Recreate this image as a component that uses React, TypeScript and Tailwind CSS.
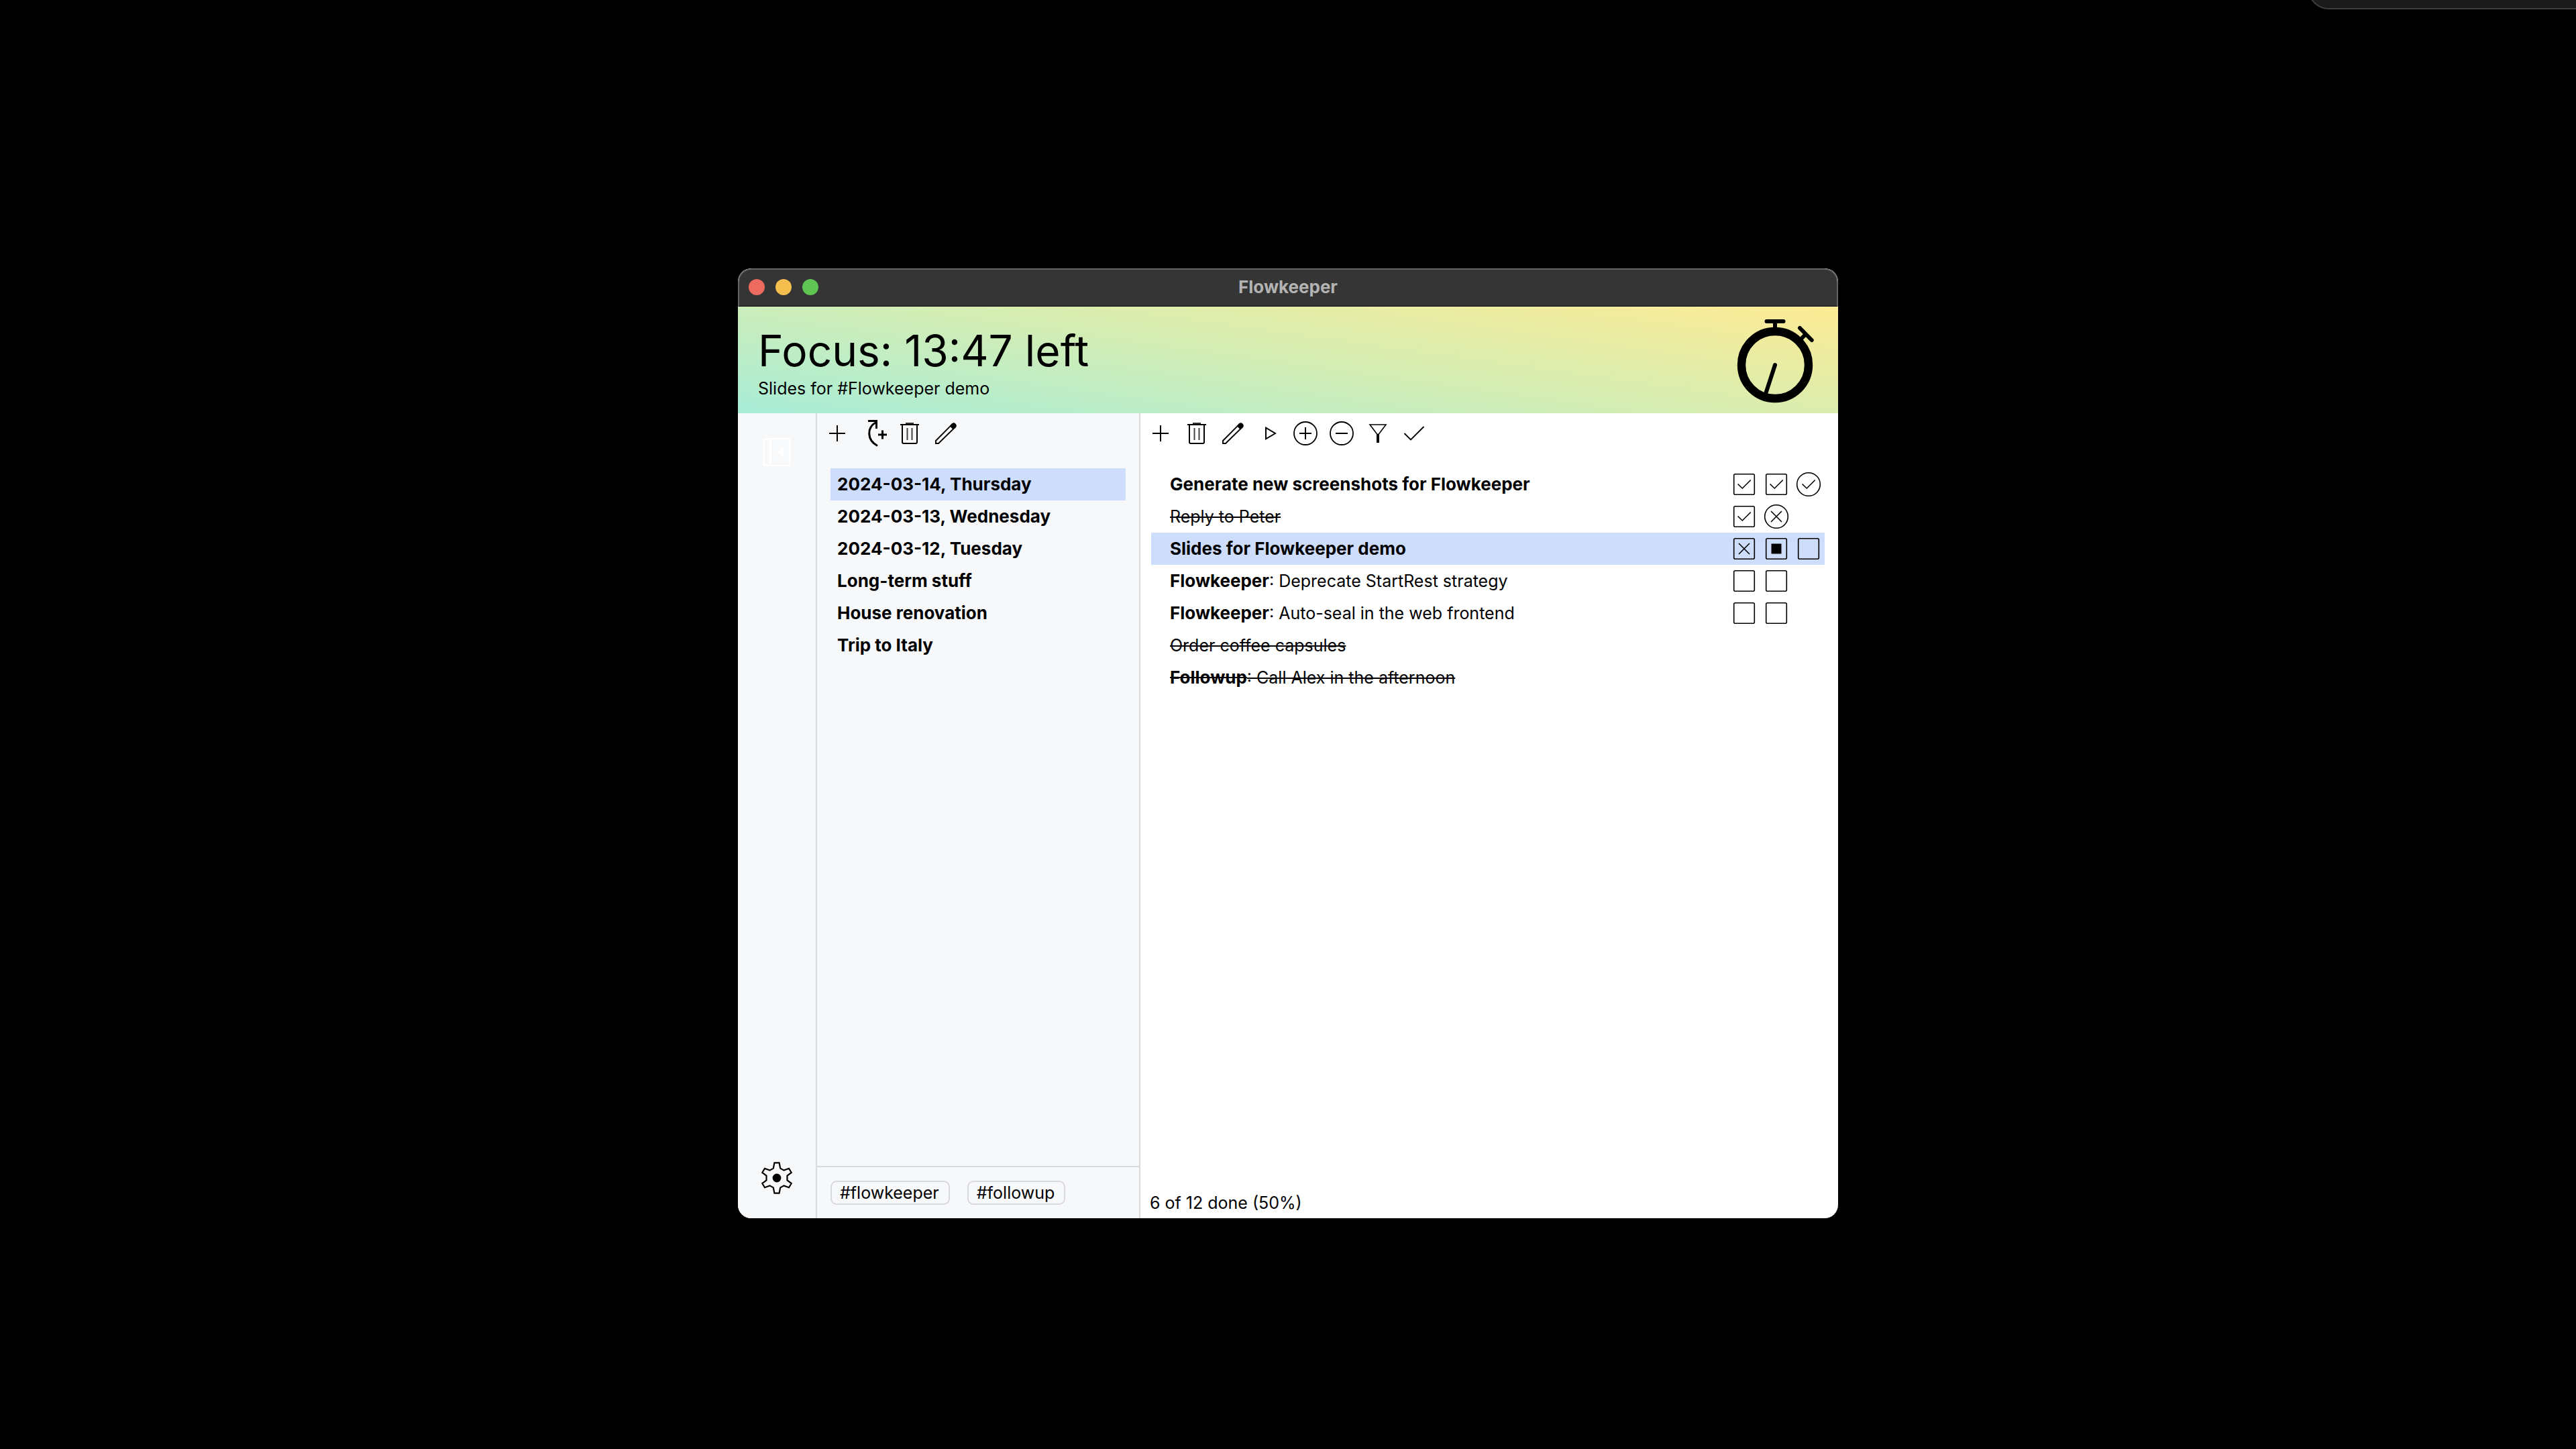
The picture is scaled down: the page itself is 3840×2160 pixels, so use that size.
import type { ReactNode } from "react";

type Mark = "check" | "checkCircle" | "crossCircle" | "cross" | "running" | "empty";

interface Task {
  prefix?: string;
  title: string;
  bold?: boolean;
  done?: boolean;
  selected?: boolean;
  marks: Mark[];
}

const backlogs = [
  "2024-03-14, Thursday",
  "2024-03-13, Wednesday",
  "2024-03-12, Tuesday",
  "Long-term stuff",
  "House renovation",
  "Trip to Italy",
];

const tasks: Task[] = [
  { title: "Generate new screenshots for Flowkeeper", bold: true, marks: ["check", "check", "checkCircle"] },
  { title: "Reply to Peter", done: true, marks: ["check", "crossCircle"] },
  { title: "Slides for Flowkeeper demo", bold: true, selected: true, marks: ["cross", "running", "empty"] },
  { prefix: "Flowkeeper", title: "Deprecate StartRest strategy", marks: ["empty", "empty"] },
  { prefix: "Flowkeeper", title: "Auto-seal in the web frontend", marks: ["empty", "empty"] },
  { title: "Order coffee capsules", done: true, marks: [] },
  { prefix: "Followup", title: "Call Alex in the afternoon", done: true, marks: [] },
];

function Icon({ children, width = 2 }: { children: ReactNode; width?: number }) {
  return (
    <svg viewBox="0 0 48 48" className="block size-12" fill="none" stroke="currentColor" strokeWidth={width} aria-hidden="true">
      {children}
    </svg>
  );
}

const PlusIcon = () => (
  <Icon>
    <path d="M12 24H36M24 12V36" />
  </Icon>
);

const RepeatPlusIcon = () => (
  <Icon width={3}>
    <path d="M16 5.5H28.5V17" />
    <path d="M28 7.5C14 15 14 34 30 42.5" />
    <path d="M31 26H44M37.500 19.500V32.500" />
  </Icon>
);

const TrashIcon = () => (
  <Icon>
    <path d="M10 11H38" />
    <path d="M18 9H30" stroke="#333" />
    <path d="M13 11V37A2 2 0 0 0 15 39H33A2 2 0 0 0 35 37V11" />
    <path d="M20.500 16V34M27.500 16V34" stroke="#444" />
  </Icon>
);

const PencilIcon = () => (
  <Icon width={1.9}>
    <path d="M9 39V35L33.600 10.200A3.200 3.200 0 0 1 37.900 14.600L13 39Z" />
    <path d="M31 13L34 9.800A3.200 3.200 0 0 1 38.300 14.200L35 17.200Z" fill="currentColor" />
  </Icon>
);

const PlayIcon = () => (
  <Icon>
    <path d="M19 15.700L33 24L19 32.300Z" />
  </Icon>
);

const CirclePlusIcon = () => (
  <Icon width={1.8}>
    <circle cx="24" cy="24" r="17" />
    <path d="M15 24H33M24 15V33" strokeWidth="2" />
  </Icon>
);

const CircleMinusIcon = () => (
  <Icon width={1.8}>
    <circle cx="24" cy="24" r="17" />
    <path d="M15 24H33" strokeWidth="2" />
  </Icon>
);

const FilterIcon = () => (
  <Icon width={1.600}>
    <path d="M12 11H36L25 25.500H23Z" />
    <path d="M24 25V38" strokeWidth="4" />
  </Icon>
);

const CheckIcon = () => (
  <Icon width={1.900}>
    <path d="M9.500 24L19 33.500L38.500 14" />
  </Icon>
);

const GearIcon = () => (
  <Icon>
    <path
      strokeWidth="2.200"
      d="M20.400 1.400H27.600L29.200 9.600L34.500 12.600L42 9.800L45.700 16L39.500 20.500V27.500L45.700 32L42 38.200L34.500 35.400L29.200 38.400L27.600 46.600H20.400L18.800 38.400L13.500 35.400L6 38.200L2.300 32L8.500 27.500V20.500L2.300 16L6 9.800L13.500 12.600L18.800 9.600Z"
    />
    <circle cx="24" cy="24" r="6.400" fill="currentColor" stroke="none" />
  </Icon>
);

const CollapseIcon = () => (
  <Icon width={2.500}>
    <rect x="4.200" y="4.200" width="39.600" height="39.600" rx="3" fill="#f8f9fb" />
    <path d="M14.500 4V44" />
    <path d="M24.500 24L34 16V32Z" fill="currentColor" stroke="none" />
  </Icon>
);

const Stopwatch = () => (
  <svg viewBox="0 0 128 128" className="block size-32 shrink-0" fill="none" stroke="black" strokeWidth="6" role="img" aria-label="Timer">
    <circle cx="64" cy="71" r="50" strokeWidth="12.400" />
    <path d="M51.500 6H76.500" strokeLinecap="round" />
    <path d="M64 6V18" />
    <path d="M101 16L118.700 34" strokeLinecap="round" />
    <path d="M110 25L102 33" />
    <path d="M64 71L50 114" strokeLinecap="round" />
  </svg>
);

const markLabels: Record<Mark, string> = {
  check: "Completed",
  checkCircle: "Completed, unplanned",
  crossCircle: "Voided, unplanned",
  cross: "Voided",
  running: "Running",
  empty: "Planned",
};

function MarkIcon({ kind }: { kind: Mark }) {
  const round = kind === "checkCircle" || kind === "crossCircle";
  return (
    <svg viewBox="0 0 48 48" className="block size-12" fill="none" stroke="black" strokeWidth="1.600" role="img" aria-label={markLabels[kind]}>
      {round ? <circle cx="24" cy="24" r="17.300" /> : <rect x="8.700" y="8.700" width="30.600" height="30.600" rx="2" />}
      {(kind === "check" || kind === "checkCircle") && <path d="M14.500 23.500L21.300 30L33.700 17.500" />}
      {(kind === "cross" || kind === "crossCircle") && <path d="M16 16L32 32M32 16L16 32" />}
      {kind === "running" && <rect x="16.500" y="16.500" width="15" height="15" fill="black" stroke="none" />}
    </svg>
  );
}

function Tool({ label, children }: { label: string; children: ReactNode }) {
  return (
    <button type="button" aria-label={label} className="size-12 shrink-0">
      {children}
    </button>
  );
}

function TitleBar() {
  return (
    <div className="grid h-[57px] shrink-0 grid-cols-[1fr_auto_1fr] items-center rounded-t-[20px] border-2 border-b border-[#656566] border-b-black bg-[#353535] pb-0.5">
      <div className="flex gap-4 pl-3.5">
        <button type="button" aria-label="Close" className="size-6 rounded-full bg-[#ed6a5e]" />
        <button type="button" aria-label="Minimize" className="size-6 rounded-full bg-[#f5bf4f]" />
        <button type="button" aria-label="Zoom" className="size-6 rounded-full bg-[#61c554]" />
      </div>
      <div className="text-[26px] leading-8 font-bold text-[#b3b3b3]">Flowkeeper</div>
    </div>
  );
}

export default function App() {
  return (
    <div className="relative grid min-h-screen grid-cols-[275fr_410fr_275fr] grid-rows-[50fr_177fr_43fr] overflow-hidden bg-black font-['Inter',sans-serif] text-[25px] leading-8 text-black">
      <div className="absolute -top-20 -right-10 h-[94px] w-[440px] rounded-bl-[32px] border-2 border-[#3d3d3d] bg-[#1b1b1b]" />

      <main className="col-start-2 row-start-2 flex flex-col overflow-hidden rounded-[20px] bg-white">
        <TitleBar />
        <header className="flex h-[159px] shrink-0 items-center justify-between bg-[linear-gradient(8deg,#a8edd8,#d5edb2_52%,#feeb94)] px-[30px]">
          <div className="pt-1">
            <h1 className="text-[64px] leading-20">Focus: 13:47 left</h1>
            <p>Slides for #Flowkeeper demo</p>
          </div>
          <Stopwatch />
        </header>

        <div className="flex flex-1">
          <nav className="flex w-[118px] shrink-0 flex-col items-center justify-between border-r-2 border-[#d8d9db] bg-[#f7f8fa] pt-[34px] pb-9">
            <button type="button" aria-label="Toggle backlogs" className="size-12 text-white">
              <CollapseIcon />
            </button>
            <button type="button" aria-label="Settings" className="size-12">
              <GearIcon />
            </button>
          </nav>

          <aside className="flex w-[482px] shrink-0 flex-col border-r-2 border-[#d8d9db] bg-[#f7f8fa]">
            <div className="flex gap-1.5 px-1.5 pt-1.5">
              <Tool label="New backlog"><PlusIcon /></Tool>
              <Tool label="New backlog from incomplete"><RepeatPlusIcon /></Tool>
              <Tool label="Delete backlog"><TrashIcon /></Tool>
              <Tool label="Rename backlog"><PencilIcon /></Tool>
            </div>
            <ul className="mt-7 flex-1 px-5 text-[26px] font-bold">
              {backlogs.map((name, i) => (
                <li key={name}>
                  <button type="button" className={`flex h-12 w-full items-center px-2.5 text-left ${i === 0 ? "bg-[#cfddfd]" : ""}`}>
                    {name}
                  </button>
                </li>
              ))}
            </ul>
            <div className="flex gap-[26px] border-t-2 border-[#d8d9db] px-5 py-5">
              <button type="button" className="h-9 rounded-[9px] border-2 border-[#d8d9db] pr-3.5 pl-3 leading-8">#flowkeeper</button>
              <button type="button" className="h-9 rounded-[9px] border-2 border-[#d8d9db] pr-3.5 pl-3 leading-8">#followup</button>
            </div>
          </aside>

          <section className="flex min-w-0 flex-1 flex-col">
            <div className="flex gap-1.5 px-1.5 pt-1.5">
              <Tool label="New task"><PlusIcon /></Tool>
              <Tool label="Delete task"><TrashIcon /></Tool>
              <Tool label="Rename task"><PencilIcon /></Tool>
              <Tool label="Start"><PlayIcon /></Tool>
              <Tool label="Add pomodoro"><CirclePlusIcon /></Tool>
              <Tool label="Remove pomodoro"><CircleMinusIcon /></Tool>
              <Tool label="Filter"><FilterIcon /></Tool>
              <Tool label="Complete"><CheckIcon /></Tool>
            </div>
            <ul className="mt-7 flex-1 pr-5 pl-4">
              {tasks.map((task) => (
                <li key={task.title} className={`flex h-12 items-center justify-between pl-7 ${task.selected ? "bg-[#cfddfd]" : ""}`}>
                  <span className={`${task.bold ? "text-[26px] font-bold" : ""} ${task.done ? "line-through decoration-2" : ""}`}>
                    {task.prefix && <b className="text-[26px]">{task.prefix}</b>}
                    {task.prefix && ": "}
                    {task.title}
                  </span>
                  <span className="grid w-36 grid-cols-3">
                    {task.marks.map((mark, i) => (
                      <MarkIcon key={i} kind={mark} />
                    ))}
                  </span>
                </li>
              ))}
            </ul>
            <p className="px-3.5 pb-[7px]">6 of 12 done (50%)</p>
          </section>
        </div>
      </main>
    </div>
  );
}
